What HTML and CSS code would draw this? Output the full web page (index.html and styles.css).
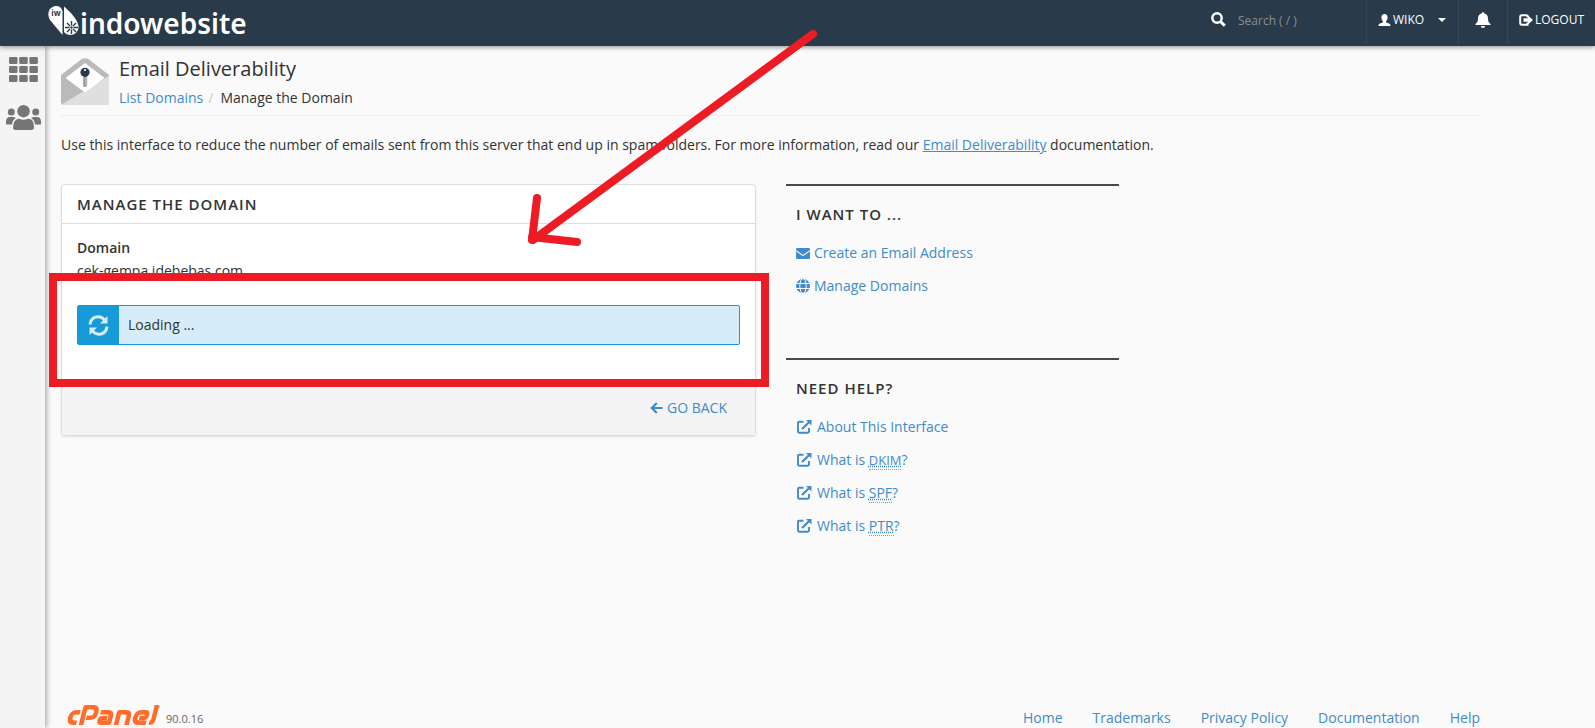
FILE: index.html
```html
<!DOCTYPE html>
<html lang="en">
<head>
<meta charset="utf-8">
<title>Email Deliverability</title>
<link rel="stylesheet" href="styles.css">
</head>
<body>
<svg class="defs" aria-hidden="true">
  <symbol id="external" viewBox="0 0 15 14">
    <path d="M6.500 1.700H2.200Q1 1.700 1 2.900V11.600Q1 12.800 2.200 12.800H10.800Q12 12.800 12 11.600V8" fill="none" stroke="currentColor" stroke-width="1.900"/>
    <path d="M5 9 12.500 1.800" fill="none" stroke="currentColor" stroke-width="2.200"/>
    <path d="M9 0H14.500V5.500Z" fill="currentColor"/>
  </symbol>
</svg>
<header class="topbar">
  <a class="brand" href="#" aria-label="indowebsite">
    <svg class="brand-mark" viewBox="0 0 32 30" aria-hidden="true">
      <path d="M14.500 5V29L2 14C-2 7 2 0 8 0Q13 0 14.500 5Z" fill="#fff"/>
      <path d="M16 .5C20 4 29 12 30.500 20C31 25 27 29 22.500 29Q18.500 29 16 26Z" fill="#fff"/>
      <g fill="none" stroke="#293a4a" stroke-width="1.400">
        <path d="M23.500 15V19.500M23.500 23.500V28M17 21.500H21.500M25.500 21.500H30M19 17 22 20M25 23 28 26M19 26 22 23M25 20 28 17"/>
      </g>
      <circle cx="23.500" cy="21.500" r="1.200" fill="#293a4a"/>
      <text x="8" y="10" class="mark-text">iw</text>
    </svg>
    <span class="brand-name">indowebsite</span>
  </a>
  <div class="tools">
    <label class="search">
      <svg viewBox="0 0 15 15" width="15" height="15" aria-hidden="true"><circle cx="6" cy="6" r="4.700" fill="none" stroke="#fff" stroke-width="2.400"/><path d="m9.500 9.500 4.300 4.300" stroke="#fff" stroke-width="3"/></svg>
      <input type="text" aria-label="Search" placeholder="Search ( / )">
    </label>
    <button class="tool user" type="button">
      <svg viewBox="0 0 12 12" width="13" height="12" aria-hidden="true"><path d="M6 0C8 0 9.200 1.500 9.100 3.500C9 5.500 8.300 6.500 7.500 7.300V8.300L11 9.700Q12 10.200 12 12H0Q0 10.200 1 9.700L4.500 8.300V7.300C3.700 6.500 3 5.500 2.900 3.500C2.800 1.500 4 0 6 0Z" fill="#fff"/></svg>
      <span>WIKO</span>
      <i class="caret"></i>
    </button>
    <button class="tool bell" type="button" aria-label="Notifications">
      <svg viewBox="0 0 16 16" width="16" height="16" aria-hidden="true"><path d="M7 1.200Q7 0 8 0T9 1.200C12 1.800 13 4 13 6.500C13 9.500 14 10.800 15.500 12V13H.5V12C2 10.800 3 9.500 3 6.500C3 4 4 1.800 7 1.200ZM5.800 14H10.200Q10 16 8 16T5.800 14Z" fill="#fff"/></svg>
    </button>
    <a class="tool logout" href="#">
      <svg viewBox="0 0 14 12" width="14" height="12" aria-hidden="true"><path d="M8.500 1.200H3Q1.200 1.200 1.200 3V9Q1.200 10.800 3 10.800H8.500V8.500M8.500 1V3.500" fill="none" stroke="#fff" stroke-width="2"/><path d="M4.500 4.300H9V1.500L14 6 9 10.500V7.700H4.500Z" fill="#fff"/></svg>
      <span>LOGOUT</span>
    </a>
  </div>
</header>
<div class="shell">
  <nav class="sidebar" aria-label="Main">
    <a href="#" aria-label="Tools">
      <svg viewBox="0 0 29 25" width="29" height="25" aria-hidden="true"><g fill="#757575"><rect width="8.500" height="7" rx="1.300"/><rect x="10.200" width="8.500" height="7" rx="1.300"/><rect x="20.400" width="8.500" height="7" rx="1.300"/><rect y="9" width="8.500" height="7" rx="1.300"/><rect x="10.200" y="9" width="8.500" height="7" rx="1.300"/><rect x="20.400" y="9" width="8.500" height="7" rx="1.300"/><rect y="18" width="8.500" height="7" rx="1.300"/><rect x="10.200" y="18" width="8.500" height="7" rx="1.300"/><rect x="20.400" y="18" width="8.500" height="7" rx="1.300"/></g></svg>
    </a>
    <a href="#" aria-label="User manager">
      <svg viewBox="0 0 35 25" width="35" height="25" aria-hidden="true"><g fill="#757575"><circle cx="17.500" cy="6.200" r="6.200"/><circle cx="5.300" cy="7" r="3.500"/><circle cx="29.700" cy="7" r="3.500"/><path d="M7 25Q7 13.800 13 13.800Q17.500 15.500 22 13.800Q28 13.800 28 22Q28 25 25.500 25H9.500Q7 25 7 22ZM0 19V17Q0 12 4 12H7.500L10 13Q6.500 14.500 6 19.500H1Q0 19.500 0 19ZM35 19V17Q35 12 31 12H27.500L25 13Q28.500 14.500 29 19.500H34Q35 19.500 35 19Z"/></g></svg>
    </a>
  </nav>
  <div class="page">
    <main>
      <div class="heading">
        <svg viewBox="0 0 48 48" width="48" height="48" aria-hidden="true">
          <path d="M0 17 20 1.500Q24-1.200 28 1.500L48 17V45Q48 47 46 47H2Q0 47 0 45Z" fill="#bababa"/>
          <path d="M48 18V45Q48 47 46 47H2Q1 47 .6 46.500Z" fill="#dfdfdf"/>
          <path d="M24 5 43.500 20 24 34.500 4.500 20Z" fill="#fff"/>
          <path d="M22.200 17H26.200V27L25 29H22.800L22.200 28Z" fill="#999"/><path d="M25 18V28" stroke="#ccc"/>
          <circle cx="24" cy="14.300" r="4.600" fill="#293a4a"/><circle cx="24" cy="12" r="1.100" fill="#fff"/>
        </svg>
        <div>
          <h1>Email Deliverability</h1>
          <nav class="crumbs" aria-label="Breadcrumb"><a href="#">List Domains</a><i>/</i><span>Manage the Domain</span></nav>
        </div>
      </div>
      <p class="intro">Use this interface to reduce the number of emails sent from this server that end up in spam folders. For more information, read our <a href="#">Email Deliverability</a> documentation.</p>
      <div class="columns">
        <section class="panel">
          <h2>Manage the Domain</h2>
          <div class="panel-body">
            <strong>Domain</strong>
            <p>cek-gempa.idebebas.com</p>
            <div class="loading" role="status">
              <div class="loading-icon">
                <svg viewBox="0 0 21 21" width="21" height="21" aria-hidden="true"><g fill="none" stroke="#d7ecf9" stroke-width="3"><path d="M2 9.500C3 1 12.500-.5 16.800 5.500"/><path d="M19 11.500C18 20 8.500 21.500 4.200 15.500"/></g><path d="M19.500 1V8.500H12ZM1.500 20V12.500H9Z" fill="#d7ecf9"/></svg>
              </div>
              <span>Loading ...</span>
            </div>
          </div>
          <div class="panel-foot">
            <a href="#"><svg viewBox="0 0 13 12" width="13" height="12" aria-hidden="true"><path d="M6.800 1 1.800 6 6.800 11M2 6H12.500" fill="none" stroke="currentColor" stroke-width="2.200"/></svg>GO BACK</a>
          </div>
          <div class="highlight"></div>
        </section>
        <aside>
          <section class="side wants">
            <h2>I want to ...</h2>
            <a href="#"><svg viewBox="0 0 14 11" width="14" height="11" aria-hidden="true"><path d="M1.300 0H12.700Q14 0 14 1.300V2L8 6.300Q7 7 6 6.300L0 2V1.300Q0 0 1.300 0ZM0 3.300 5.500 7.200Q7 8.200 8.500 7.200L14 3.300V9.700Q14 11 12.700 11H1.300Q0 11 0 9.700Z" fill="currentColor"/></svg>Create an Email Address</a>
            <a href="#"><svg viewBox="0 0 14 14" width="14" height="14" aria-hidden="true"><circle cx="7" cy="7" r="7" fill="currentColor"/><g fill="none" stroke="#fafafa"><path d="M0 4.500H14M0 9.500H14"/><ellipse cx="7" cy="7" rx="3.200" ry="7.500"/></g></svg>Manage Domains</a>
          </section>
          <section class="side help">
            <h2>Need Help?</h2>
            <a href="#"><svg width="15" height="14" aria-hidden="true"><use href="#external"/></svg>About This Interface</a>
            <a href="#"><svg width="15" height="14" aria-hidden="true"><use href="#external"/></svg><span>What is <abbr class="small" title="DomainKeys Identified Mail">DKIM</abbr>?</span></a>
            <a href="#"><svg width="15" height="14" aria-hidden="true"><use href="#external"/></svg><span>What is <abbr title="Sender Policy Framework">SPF</abbr>?</span></a>
            <a href="#"><svg width="15" height="14" aria-hidden="true"><use href="#external"/></svg><span>What is <abbr title="Pointer Record">PTR</abbr>?</span></a>
          </section>
        </aside>
      </div>
    </main>
    <footer>
      <div class="product">
        <svg viewBox="0 0 94 20" width="94" height="20" role="img" aria-label="cPanel">
          <g transform="translate(4.500 0) skewX(-14)" fill="none" stroke="#ff6c2c" stroke-width="4.600" stroke-linejoin="round">
            <path d="M11.500 7.300H7.500Q3 7.300 3 12.500T7.500 17.700H10.500"/>
            <path d="M15.500 20V2.300H23.500Q27.500 2.300 27.500 7.500T23.500 12.700H19"/>
            <path d="M32 7.300H39Q43 7.300 43 11V17.700H35.500Q33 17.700 33 15.300T35.500 13H40"/>
            <path d="M50.500 20V7.300H57Q61 7.300 61 11.300V20"/>
            <path d="M80 17.700H72.500Q68 17.700 68 12.500T72.500 7.300H76Q79 7.300 79 10.200T76 13H72"/>
            <path d="M86.500 0V14.500Q86.500 17.700 83 17.700"/>
          </g>
          <circle cx="92.500" cy="2" r="1" fill="none" stroke="#ff6c2c" stroke-width=".5"/>
        </svg>
        <span>90.0.16</span>
      </div>
      <nav class="foot-links" aria-label="Footer"><a href="#">Home</a><a href="#">Trademarks</a><a href="#">Privacy Policy</a><a href="#">Documentation</a><a href="#">Help</a></nav>
    </footer>
  </div>
</div>
<svg class="arrow" viewBox="0 0 290 220" aria-hidden="true"><path d="M285 5 5 211M9 169 4 211M4 208 49 213" fill="none" stroke="#ed1c24" stroke-width="8" stroke-linecap="round"/></svg>
</body>
</html>
```
FILE: styles.css
```css
* { box-sizing: border-box; }
body {
  margin: 0;
  min-height: 100vh;
  display: flex;
  flex-direction: column;
  background: #fafafa;
  color: #333;
  font: 14px/20px "Open Sans", "Noto Sans", sans-serif;
}
h1, h2, p { margin: 0; }
a { color: #428bca; text-decoration: none; }
svg { flex: none; display: block; }
.defs { position: absolute; width: 0; height: 0; }

.topbar {
  position: relative;
  z-index: 2;
  height: 46px;
  flex: none;
  display: flex;
  justify-content: space-between;
  background: #293a4a;
  box-shadow: 0 1px 5px rgba(0, 0, 0, .45);
}
.brand { display: flex; padding: 6px 0 0 48px; color: #fff; }
.brand-mark { width: 32px; height: 30px; }
.mark-text { font: 700 8px "Open Sans", sans-serif; fill: #293a4a; text-anchor: middle; }
.brand-name { font: 600 28px/35px "Noto Sans", sans-serif; }
.tools { display: flex; height: 45px; }
.search { display: flex; gap: 7px; padding: 12px 0 0 17px; width: 172px; }
.search input {
  width: 120px;
  height: 17px;
  padding: 0 5px;
  border: 0;
  background: none;
  color: #fff;
  font: 12px/17px "Open Sans", sans-serif;
}
.search input::placeholder { color: #8a8f94; opacity: 1; }
.tool {
  display: flex;
  align-items: center;
  padding: 0 12px 6px;
  border: 0;
  border-left: 1px solid #344555;
  background: none;
  color: #fff;
  font: 12px/18px "Open Sans", sans-serif;
}
.tool.user { gap: 2px; width: 92px; padding-left: 11px; }
.tool.bell { width: 49px; padding: 0 16px 6px; }
.tool.logout { gap: 2px; width: 88px; padding-left: 11px; }
.caret { margin-left: 12px; border: 4px solid transparent; border-top-color: #fff; border-bottom: 0; }

.shell { flex: 1; display: flex; }
.sidebar {
  width: 45px;
  flex: none;
  display: flex;
  flex-direction: column;
  align-items: center;
  gap: 23px;
  padding: 11px 0 0 2px;
  background: #f4f4f4;
  box-shadow: 1px 0 6px rgba(0, 0, 0, .4);
}
.page { flex: 1; display: flex; flex-direction: column; padding: 12px 115px 0 16px; }
main { flex: 1; }
.heading { display: flex; gap: 10px; padding-bottom: 7px; border-bottom: 1px solid #eee; }
h1 { font-size: 20px; font-weight: 400; line-height: 22px; }
.crumbs { display: flex; gap: 5px; padding-top: 8px; }
.crumbs i { color: #ccc; font-style: normal; padding-right: 2px; }
.intro { padding: 19px 0 29px; }
.intro a { text-decoration: underline; }

.columns { display: grid; grid-template-columns: 695px 333px; gap: 30px; align-items: start; }
h2 { font-size: 15px; font-weight: 600; line-height: 20px; letter-spacing: 1px; text-transform: uppercase; }
.panel {
  position: relative;
  border: 1px solid #ddd;
  border-radius: 4px;
  background: #fff;
  box-shadow: 0 1px 2px rgba(0, 0, 0, .1);
}
.panel h2 { padding: 9px 15px; border-bottom: 1px solid #ddd; }
.panel-body { padding: 14px 15px 35px; }
.panel-body strong { display: block; font-weight: 600; }
.panel-body p { padding: 3px 0 24px; }
.loading { display: flex; height: 40px; border: 1px solid #179bd7; border-radius: 2px; background: #d7ecf9; }
.loading-icon { width: 41px; display: grid; place-items: center; background: #179bd7; }
.loading span { padding: 9px; }
.panel-foot { display: flex; justify-content: flex-end; padding: 18px 28px 17px; background: #f4f4f4; }
.panel-foot a { display: flex; align-items: center; gap: 4px; }
.highlight { position: absolute; inset: 88px -14px 48px -13px; border: 8px solid #ed1c24; }

.side { border-top: 2px solid #4c4748; padding: 18px 10px 0; }
.side a { display: flex; align-items: center; gap: 4px; padding-bottom: 13px; }
.side h2 { padding-bottom: 19px; }
.wants { min-height: 174px; }
.help a { gap: 5px; padding-left: 1px; }
abbr { text-decoration: underline dotted; border-bottom: 1px dotted #999; }
.small { font-size: 13px; }

footer { display: flex; justify-content: space-between; align-items: flex-end; }
.product { display: flex; align-items: flex-end; gap: 6px; padding: 0 0 3px 5px; font-size: 11px; line-height: 12px; color: #666; }
.foot-links { display: flex; gap: 30px; }
.arrow { position: absolute; z-index: 3; left: 528px; top: 29px; width: 290px; height: 220px; }
```
